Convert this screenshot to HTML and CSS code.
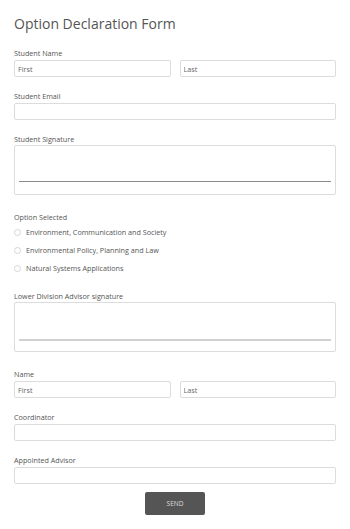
FILE: index.html
```html
<!DOCTYPE html>
<html lang="en">
<head>
    <meta charset="UTF-8">
    <meta name="viewport" content="width=device-width, initial-scale=1.0">
    <title>Option Declaration Form</title>
    <link rel="stylesheet" href="styles.css">
</head>
<body>
    <form class="form">
        <h1 class="form-title">Option Declaration Form</h1>

        <div class="field">
            <label class="field-label">Student Name</label>
            <div class="name-row">
                <input class="text-input" type="text" placeholder="First">
                <input class="text-input" type="text" placeholder="Last">
            </div>
        </div>

        <div class="field">
            <label class="field-label">Student Email</label>
            <input class="text-input" type="email">
        </div>

        <div class="field field-signature">
            <label class="field-label">Student Signature</label>
            <div class="signature"><div class="signature-line"></div></div>
        </div>

        <div class="field field-radios">
            <label class="field-label">Option Selected</label>
            <label class="radio"><span class="radio-dot"></span>Environment, Communication and Society</label>
            <label class="radio"><span class="radio-dot"></span>Environmental Policy, Planning and Law</label>
            <label class="radio"><span class="radio-dot"></span>Natural Systems Applications</label>
        </div>

        <div class="field field-signature">
            <label class="field-label">Lower Division Advisor signature</label>
            <div class="signature tall"><div class="signature-line light"></div></div>
        </div>

        <div class="field">
            <label class="field-label">Name</label>
            <div class="name-row">
                <input class="text-input" type="text" placeholder="First">
                <input class="text-input" type="text" placeholder="Last">
            </div>
        </div>

        <div class="field">
            <label class="field-label">Coordinator</label>
            <input class="text-input" type="text">
        </div>

        <div class="field field-last">
            <label class="field-label">Appointed Advisor</label>
            <input class="text-input" type="text">
        </div>

        <div class="actions">
            <button class="send" type="button">SEND</button>
        </div>
    </form>
</body>
</html>
```

FILE: styles.css
```css
body {
    margin: 0;
    background-color: #fff;
    font-family: "Open Sans", Arial, sans-serif;
    color: #555;
}

.form {
    padding: 14px 14px 0 14px;
}

.form-title {
    margin: 0 0 12px 0;
    font-size: 14px;
    font-weight: 400;
    line-height: 20px;
    color: #555;
}

.field {
    margin-bottom: 12px;
}

.field-label {
    display: block;
    font-size: 7.2px;
    line-height: 10px;
    padding-top: 2px;
    margin-bottom: 2px;
    color: #555;
}

.name-row {
    display: flex;
    gap: 9px;
}

.text-input {
    display: block;
    width: 100%;
    height: 17px;
    box-sizing: border-box;
    border: 1px solid #dcdcdc;
    border-radius: 2px;
    padding: 0 3px;
    font-family: "Open Sans", Arial, sans-serif;
    font-size: 7.2px;
    color: #555;
    background: #fff;
    outline: none;
}

.text-input::placeholder {
    color: #666;
}

.field-signature {
    margin-bottom: 15px;
}

.field-signature .field-label {
    margin-bottom: 1px;
}

.signature {
    height: 50px;
    box-sizing: border-box;
    border: 1px solid #dcdcdc;
    border-radius: 2px;
    padding: 35px 4px 0 4px;
}

.signature.tall {
    padding-top: 36px;
}

.signature-line {
    height: 1px;
    background: #8a8a8a;
}

.signature-line.light {
    height: 2px;
    background: #d0d0d0;
}

.field-radios {
    margin-bottom: 16px;
}

.field-radios .field-label {
    margin-bottom: 5px;
}

.radio {
    display: flex;
    align-items: center;
    gap: 5px;
    font-size: 7.2px;
    line-height: 10px;
    margin-bottom: 8px;
    color: #555;
}

.radio-dot {
    width: 7px;
    height: 7px;
    box-sizing: border-box;
    border: 1px solid #d5d5d5;
    border-radius: 50%;
}

.field-last {
    margin-bottom: 8px;
}

.actions {
    display: flex;
    justify-content: center;
}

.send {
    width: 60px;
    height: 23px;
    background: #555;
    color: #ddd;
    border: none;
    border-radius: 2px;
    font-family: "Open Sans", Arial, sans-serif;
    font-size: 6.5px;
}
```
